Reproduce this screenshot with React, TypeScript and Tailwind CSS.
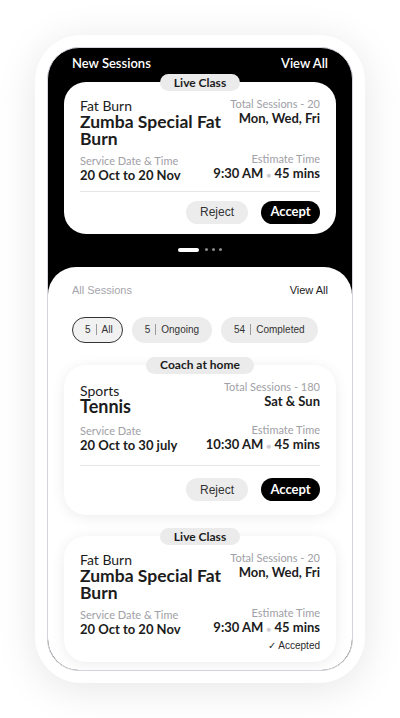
import React from 'react';

// Shared font stacks
const geo = "font-['Lato',sans-serif]";
const helv = "font-['Liberation_Sans',Arial,sans-serif]";

interface Session {
  tag: string;
  category: string;
  title: string[];
  total: string;
  days: string;
  dateLabel: string;
  date: string;
  time: string;
  duration: string;
  accepted?: boolean;
}

const newSession: Session = {
  tag: 'Live Class',
  category: 'Fat Burn',
  title: ['Zumba Special Fat', 'Burn'],
  total: 'Total Sessions - 20',
  days: 'Mon, Wed, Fri',
  dateLabel: 'Service Date & Time',
  date: '20 Oct to 20 Nov',
  time: '9:30 AM',
  duration: '45 mins',
};

const allSessions: Session[] = [
  {
    tag: 'Coach at home',
    category: 'Sports',
    title: ['Tennis'],
    total: 'Total Sessions - 180',
    days: 'Sat & Sun',
    dateLabel: 'Service Date',
    date: '20 Oct to 30 july',
    time: '10:30 AM',
    duration: '45 mins',
  },
  { ...newSession, accepted: true },
];

// One session card with its tag pill sitting on the top edge
function SessionCard({ s, shadow, loose }: { s: Session; shadow?: boolean; loose?: boolean }) {
  return (
    <div className={`flex flex-col items-center whitespace-nowrap ${geo}`}>
      <div className="relative z-10 h-[17px] px-[14px] rounded-full bg-[#ebebeb] flex items-center text-[12px] font-bold text-[#1c1c1c]">
        {s.tag}
      </div>
      <div
        className={`-mt-[9px] w-full rounded-[22px] bg-white px-4 pt-4 ${loose ? 'pb-[14px]' : 'pb-[10px]'} ${
          shadow ? 'shadow-[0_2px_14px_rgba(0,0,0,0.08)]' : ''
        }`}
      >
        <div className="flex justify-between">
          <div className="text-[#1c1c1c]">
            <div className={`text-[14px] leading-[15px] ${loose ? 'mt-[2px]' : ''}`}>{s.category}</div>
            <div className={`font-bold leading-[17px] ${loose ? 'text-[18px]' : 'text-[17.5px]'}`}>
              {s.title.map((t, i) => (
                <React.Fragment key={t}>
                  {i > 0 && <br />}
                  {t}
                </React.Fragment>
              ))}
            </div>
          </div>
          <div className="text-right -mt-[1px]">
            <div className="text-[11px] leading-[14px] text-[#a0a0a6]">{s.total}</div>
            <div className="text-[13px] leading-[14px] font-bold text-[#1c1c1c]">{s.days}</div>
          </div>
        </div>
        <div className={`flex justify-between items-end ${loose ? 'mt-[8px]' : 'mt-[5px]'}`}>
          <div>
            <div className="text-[11px] leading-[14px] text-[#a0a0a6]">{s.dateLabel}</div>
            <div className="text-[13px] leading-[14px] font-bold text-[#1c1c1c]">{s.date}</div>
          </div>
          <div className="text-right">
            <div className="text-[11px] leading-[14px] text-[#a0a0a6]">Estimate Time</div>
            <div className="text-[13px] leading-[14px] font-bold text-[#1c1c1c]">
              {s.time} <span className="text-[#d0d0d4] text-[8px] align-middle">●</span> {s.duration}
            </div>
          </div>
        </div>
        {s.accepted ? (
          <div className={`mt-[4px] text-right text-[10px] leading-3 text-[#2a2a2a] ${helv}`}>✓ Accepted</div>
        ) : (
          <>
            <div className={`h-px bg-[#e6e6e8] ${loose ? 'mt-[13px]' : 'mt-[9px]'}`} />
            <div className={`flex justify-end gap-[13px] ${loose ? 'mt-[12px]' : 'mt-[9px]'}`}>
              <button className={`h-[23px] w-[62px] rounded-full bg-[#ececec] text-[12px] text-[#333] ${helv}`}>
                Reject
              </button>
              <button className={`h-[23px] w-[59px] rounded-full bg-black text-[13px] text-white font-bold ${geo}`}>
                Accept
              </button>
            </div>
          </>
        )}
      </div>
    </div>
  );
}

// Filter chip: count | label
function Chip({ count, label, active }: { count: string; label: string; active?: boolean }) {
  return (
    <div
      className={`h-[26px] rounded-full bg-[#ececec] flex items-center text-[10px] text-[#333] ${helv} ${
        active ? 'border border-[#333] bg-[#f1f1f1] pl-[12px] pr-[9px]' : 'px-[13px]'
      }`}
    >
      <span>{count}</span>
      <span className="mx-[5px] w-px h-[11px] bg-[#9a9a9a]" />
      <span>{label}</span>
    </div>
  );
}

export default function App() {
  return (
    <div className="min-h-screen bg-white flex justify-center pt-[35px]">
      {/* phone frame */}
      <div className="w-[330px] h-[648px] rounded-[46px] bg-white p-3 shadow-[0_6px_40px_rgba(0,0,0,0.10)]">
        <div className="h-full rounded-[32px] border border-[#d3d3db] bg-black overflow-hidden flex flex-col">
          {/* new sessions */}
          <div className={`px-6 pt-[7px] flex justify-between text-white text-[13px] leading-4 font-semibold ${geo}`}>
            <span>New Sessions</span>
            <span>View All</span>
          </div>
          <div className="px-4 mt-[3px]">
            <SessionCard s={newSession} />
          </div>
          {/* pager dots */}
          <div className="flex justify-center items-center gap-[4px] mt-[14px]">
            <span className="w-[21px] h-[4px] rounded-full bg-white" />
            <span className="ml-[2px] w-[3px] h-[3px] rounded-full bg-[#8a8a8a]" />
            <span className="w-[3px] h-[3px] rounded-full bg-[#8a8a8a]" />
            <span className="w-[3px] h-[3px] rounded-full bg-[#8a8a8a]" />
          </div>

          {/* all sessions panel */}
          <div className="flex-1 mt-[15px] bg-white rounded-t-[28px] px-4 pt-[15px]">
            <div className={`px-2 flex justify-between text-[11px] leading-4 ${helv}`}>
              <span className="text-[#a5a5ab]">All Sessions</span>
              <span className="text-[#1c1c1c]">View All</span>
            </div>
            <div className="px-2 mt-[19px] flex gap-[9px]">
              <Chip count="5" label="All" active />
              <Chip count="5" label="Ongoing" />
              <Chip count="54" label="Completed" />
            </div>
            <div className="mt-[14px] flex flex-col gap-[13px]">
              <SessionCard s={allSessions[0]} shadow loose />
              <SessionCard s={allSessions[1]} shadow />
            </div>
          </div>
        </div>
      </div>
    </div>
  );
}
